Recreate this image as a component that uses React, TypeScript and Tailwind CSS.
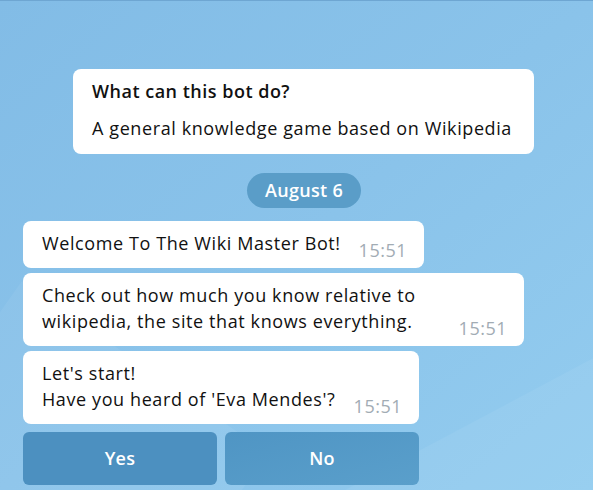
import React from 'react'

const font = { fontFamily: '"Open Sans", "Noto Sans", Arial, sans-serif' }

interface BubbleProps {
  lines: string[]
  time: string
  width: string
}

function Bubble({ lines, time, width }: BubbleProps) {
  return (
    <div className={`flex items-end justify-between rounded-[8px] bg-white pl-[19px] pr-[17px] pt-[9px] pb-[6px] ${width}`}>
      <div className="mb-[6px] text-[18px] leading-[26px] tracking-[0.6px] text-[#111]">
        {lines.map((l, i) => (
          <div key={i}>{l}</div>
        ))}
      </div>
      <span className="text-[18px] leading-[24px] tracking-[0.5px] text-[#a2acb4]">{time}</span>
    </div>
  )
}

export default function App() {
  return (
    <div
      style={font}
      className="relative h-[490px] w-[593px] overflow-hidden border-t border-[#6ea6d2] bg-linear-to-br from-[#82bce6] via-[#8ac3ea] to-[#93ccef]"
    >
      <div className="pointer-events-none absolute -left-[120px] top-[330px] h-[400px] w-[300px] rotate-[35deg] bg-white/5" />
      <div className="pointer-events-none absolute left-[300px] top-[400px] h-[300px] w-[500px] -rotate-[28deg] bg-white/5" />

      <div className="relative flex flex-col">
        <div className="ml-[73px] mt-[68px] w-[461px] rounded-[8px] bg-white px-[19px] pt-[9px] pb-[13px] text-[#111]">
          <div className="text-[18px] font-semibold leading-[26px] tracking-[0.5px]">What can this bot do?</div>
          <div className="mt-[11px] text-[18px] leading-[26px] tracking-[0.6px]">
            A general knowledge game based on Wikipedia
          </div>
        </div>

        <div className="mt-[19px] flex justify-center pl-[15px]">
          <div className="flex h-[35px] items-center rounded-full bg-[#5a9dc8] px-[18px] text-[18px] font-semibold tracking-[0.3px] text-white">
            August 6
          </div>
        </div>

        <div className="ml-[23px] mt-[13px] flex flex-col gap-[5px]">
          <Bubble width="w-[401px]" lines={['Welcome To The Wiki Master Bot!']} time="15:51" />
          <Bubble
            width="w-[501px]"
            lines={['Check out how much you know relative to', 'wikipedia, the site that knows everything.']}
            time="15:51"
          />
          <Bubble width="w-[396px]" lines={["Let's start!", "Have you heard of 'Eva Mendes'?"]} time="15:51" />
          <div className="mt-[3px] flex w-[396px] gap-[8px]">
            <button className="h-[53px] flex-1 rounded-[6px] bg-[#4c90c0] text-[18px] font-semibold tracking-[0.3px] text-white">
              Yes
            </button>
            <button className="h-[53px] flex-1 rounded-[6px] bg-linear-to-br from-[#4f95c4] to-[#5a9fcb] text-[18px] font-semibold tracking-[0.3px] text-white">
              No
            </button>
          </div>
        </div>
      </div>
    </div>
  )
}
